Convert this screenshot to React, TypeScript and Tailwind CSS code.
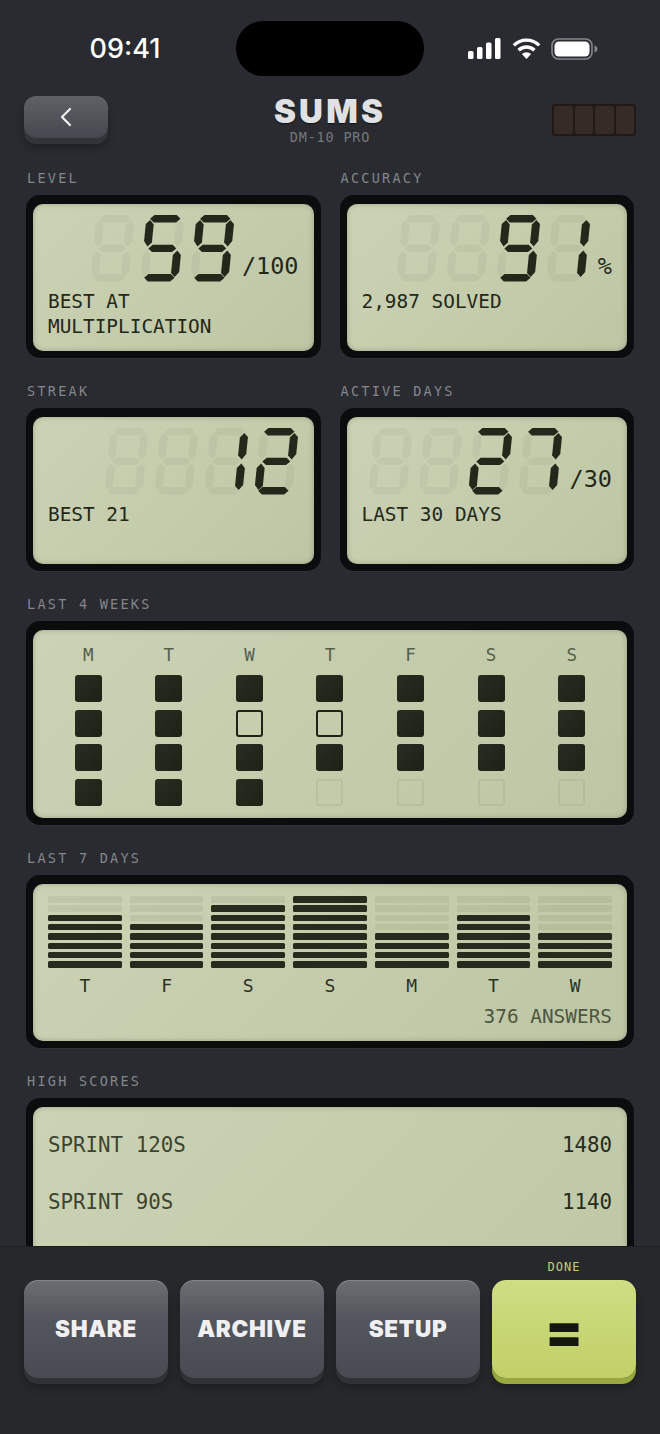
import React from 'react';

const MAP: Record<string, string> = {
  '0': 'abcdef', '1': 'bc', '2': 'abged', '3': 'abgcd', '4': 'fgbc', '5': 'afgcd', '6': 'afgedc', '7': 'abc', '8': 'abcdefg', '9': 'abcdfg', ' ': '',
};
const SEG: Record<string, number[][]> = {
  a: [[3.8, 3.7], [7.8, 0], [30.2, 0], [34.2, 3.7], [30.2, 7.4], [7.8, 7.4]],
  b: [[30.2, 9.5], [34.2, 5], [38.2, 9], [38.2, 26], [34.2, 31.5], [30.2, 27.5]],
  c: [[30.2, 40], [34.2, 35.5], [38.2, 40], [38.2, 57], [34.2, 62], [30.2, 58]],
  d: [[3.8, 62.8], [7.8, 59.1], [30.2, 59.1], [34.2, 62.8], [30.2, 66.5], [7.8, 66.5]],
  e: [[0, 40], [4, 35.5], [8, 40], [8, 58], [4, 62], [0, 57]],
  f: [[0, 9], [4, 5], [8, 9.5], [8, 27.5], [4, 31.5], [0, 26]],
  g: [[5, 33.4], [9, 29.7], [29, 29.7], [33, 33.4], [29, 37.1], [9, 37.1]],
};
const pts = (p: number[][]) => p.map(([x, y]) => `${x + (66.5 - y) * 0.1},${y}`).join(' ');

function Digit({ c }: { c: string }) {
  const on = MAP[c] ?? '';
  return (
    <svg width="45" height="67" viewBox="0 0 45 67" className="block shrink-0">
      {Object.keys(SEG).map((k) => (
        <polygon key={k} points={pts(SEG[k])} fill={on.includes(k) ? '#23281a' : 'rgba(50,62,30,0.052)'} />
      ))}
    </svg>
  );
}

function Label({ children }: { children: React.ReactNode }) {
  return <div className="h-[18px] mb-[9px] pt-px text-[13.5px] leading-[18px] tracking-[2.25px] pl-px text-[#84868b] whitespace-pre">{children}</div>;
}

function Lcd({ className, children }: { className: string; children: React.ReactNode }) {
  return (
    <div className="rounded-[14px] bg-[#0b0c0e] pt-[9px] px-[7px] pb-[7px] shadow-[0_1px_1px_rgba(255,255,255,0.04)]">
      <div className={`rounded-[10px] bg-linear-135 from-[#ccd3b5] to-[#bdc6a4] shadow-[inset_0_0_5px_rgba(70,80,45,0.35)] px-[15px] ${className}`}>{children}</div>
    </div>
  );
}

function Stat({ label, digits, suffix, lines }: { label: string; digits: string; suffix?: string; lines: string[] }) {
  return (
    <div>
      <Label>{label}</Label>
      <Lcd className="h-[147px] pt-[11px]">
        <div className="flex justify-end items-end h-[67px]">
          <div className="flex gap-[5px]">
            {digits.split('').map((c, i) => <Digit key={i} c={c} />)}
          </div>
          {suffix && <div className="ml-[7px] mb-[2px] text-[#23281a] leading-[28px] text-[23.5px]">{suffix}</div>}
        </div>
        <div className="mt-[7px] text-[19.4px] leading-[25px] text-[#23281a]">
          {lines.map((l) => <div key={l} className="whitespace-pre">{l}</div>)}
        </div>
      </Lcd>
    </div>
  );
}

const WEEK = ['M', 'T', 'W', 'T', 'F', 'S', 'S'];
const GRID = ['fffffff', 'ffoofff', 'fffffff', 'fffgggg'];

function Square({ k }: { k: string }) {
  if (k === 'f') return <div className="size-[27px] rounded-[3px] bg-linear-135 from-[#282d21] to-[#1d2117]" />;
  if (k === 'o') return <div className="size-[27px] rounded-[3px] border-[2.5px] border-[#1f2418]" />;
  return <div className="size-[27px] rounded-[3px] border-2 border-[rgba(50,62,30,0.07)]" />;
}

const BARS: [string, number][] = [['T', 6], ['F', 5], ['S', 7], ['S', 8], ['M', 4], ['T', 6], ['W', 4]];

function KeyButton({ children }: { children: React.ReactNode }) {
  return (
    <div className="h-[98px] rounded-[14px] bg-linear-to-b from-[#6c6e74] via-[#53565c] via-40% to-[#484b52] shadow-[0_6px_0_#313236,0_9px_10px_rgba(0,0,0,0.3),inset_0_1px_0_rgba(255,255,255,0.18)] flex items-center justify-center text-[#f0f0f2] font-['Inter',sans-serif] font-black text-[22.5px] tracking-[0.7px]">
      {children}
    </div>
  );
}

export default function App() {
  return (
    <div className="w-[660px] h-[1434px] overflow-hidden flex flex-col bg-[#2a2b30] font-['DejaVu_Sans_Mono',monospace]">
      <div className="h-[96px] shrink-0 flex items-start pt-[21px]">
        <div className="w-[236px] h-[55px] flex items-center justify-center pl-[14px] pt-[1px] font-['Inter',sans-serif] font-medium text-[27px] text-white">09:41</div>
        <div className="w-[188px] h-[55px] rounded-[27px] bg-black" />
        <div className="h-[55px] flex items-center pl-[44px] gap-[11px]">
          <svg width="33" height="21" viewBox="0 0 33 21">
            <rect x="0" y="13" width="5.5" height="8" rx="1.5" fill="#fff" />
            <rect x="9" y="9" width="5.5" height="12" rx="1.5" fill="#fff" />
            <rect x="18" y="4.5" width="5.5" height="16.5" rx="1.5" fill="#fff" />
            <rect x="27" y="0" width="5.5" height="21" rx="1.5" fill="#fff" />
          </svg>
          <svg width="29" height="21" viewBox="0 0 29 21" fill="none" stroke="#fff" strokeWidth="3.4">
            <path d="M1.8 7.4 A18 18 0 0 1 27.2 7.4" />
            <path d="M6.6 12.2 A11.2 11.2 0 0 1 22.4 12.2" />
            <path d="M14.5 21 L9.9 16 A6.6 6.6 0 0 1 19.1 16 Z" fill="#fff" stroke="none" />
          </svg>
          <svg width="47" height="22" viewBox="0 0 47 22" className="-ml-[1px]">
            <rect x="1" y="1" width="40" height="20" rx="6.5" fill="none" stroke="#85868a" strokeWidth="1.6" />
            <rect x="3.5" y="3.5" width="35" height="15" rx="4.5" fill="#fff" />
            <path d="M43.5 7.5 C45.5 8 46.5 9.5 46.5 11 C46.5 12.5 45.5 14 43.5 14.5 Z" fill="#85868a" />
          </svg>
        </div>
      </div>

      <div className="h-[72px] shrink-0 relative px-[24px] flex justify-between items-start">
        <div className="w-[84px] h-[42px] rounded-[12px] bg-linear-to-b from-[#5f6167] to-[#45484e] shadow-[0_6px_0_#333439,0_9px_9px_rgba(0,0,0,0.3)] flex items-center justify-center">
          <svg width="12" height="20" viewBox="0 0 12 20" fill="none" stroke="#f2f2f2" strokeWidth="2.2" strokeLinecap="round" strokeLinejoin="round">
            <path d="M10 2 L2 10 L10 18" />
          </svg>
        </div>
        <div className="flex flex-col items-center -mt-[1px]">
          <div className="font-['Inter',sans-serif] font-black text-[33px] leading-[33px] tracking-[3.2px] text-[#e0e1e4] [text-shadow:0_1px_1px_rgba(0,0,0,0.6)]">SUMS</div>
          <div className="mt-[1px] text-[13.5px] leading-[16px] tracking-[0.8px] text-[#74777c]">DM-10 PRO</div>
        </div>
        <div className="w-[84px] h-[32px] mt-[8px] rounded-[3px] bg-[#211916] p-[2px] flex gap-[2px]">
          {[0, 1, 2, 3].map((i) => <div key={i} className="flex-1 rounded-[2px] bg-[#362b25]" />)}
        </div>
      </div>

      <div className="flex-1 min-h-0 overflow-hidden px-[26px]">
        <div className="flex flex-col gap-[23px]">
          <div className="grid grid-cols-2 gap-[19px]">
            <Stat label="LEVEL" digits=" 59" suffix="/100" lines={['BEST AT', 'MULTIPLICATION']} />
            <Stat label="ACCURACY" digits="  91" suffix="%" lines={['2,987 SOLVED']} />
          </div>
          <div className="grid grid-cols-2 gap-[19px]">
            <Stat label="STREAK" digits="  12" lines={['BEST 21']} />
            <Stat label="ACTIVE DAYS" digits="  27" suffix="/30" lines={['LAST 30 DAYS']} />
          </div>

          <div>
            <Label>LAST 4 WEEKS</Label>
            <Lcd className="h-[188px] pt-[14px]">
              <div className="grid grid-cols-7">
                {WEEK.map((d, c) => (
                  <div key={c} className="flex flex-col items-center">
                    <div className="h-[22px] leading-[22px] text-[17.5px] text-[#565e4b]">{d}</div>
                    <div className="mt-[9px] flex flex-col gap-[7.5px]">
                      {GRID.map((row, r) => <Square key={r} k={row[c]} />)}
                    </div>
                  </div>
                ))}
              </div>
            </Lcd>
          </div>

          <div>
            <Label>LAST 7 DAYS</Label>
            <Lcd className="h-[157px] pt-[12px]">
              <div className="grid grid-cols-7 gap-[8px]">
                {BARS.map(([d, n], c) => (
                  <div key={c} className="flex flex-col items-center">
                    <div className="w-full flex flex-col gap-[2.83px]">
                      {[7, 6, 5, 4, 3, 2, 1, 0].map((i) => (
                        <div key={i} className={`h-[6.5px] rounded-[1.5px] ${i < n ? 'bg-[#262b1d]' : 'bg-[rgba(50,62,30,0.08)]'}`} />
                      ))}
                    </div>
                    <div className="mt-[6px] h-[24px] leading-[24px] text-[18px] text-[#2b3122]">{d}</div>
                  </div>
                ))}
              </div>
              <div className="mt-[6px] text-right text-[19.4px] leading-[25px] text-[#4e5640]">376 ANSWERS</div>
            </Lcd>
          </div>

          <div>
            <Label>HIGH SCORES</Label>
            <Lcd className="h-[260px] pt-[26px]">
              <div className="flex flex-col gap-[32px] text-[20.8px] leading-[25px]">
                <div className="flex justify-between"><span className="text-[#3d4431]">SPRINT 120S</span><span className="text-[#262c1e]">1480</span></div>
                <div className="flex justify-between"><span className="text-[#3d4431]">SPRINT 90S</span><span className="text-[#262c1e]">1140</span></div>
              </div>
            </Lcd>
          </div>
        </div>
      </div>

      <div className="h-[188px] shrink-0 bg-[#27282b] border-t border-[#1d1e20] px-[24px] pt-[11px]">
        <div className="grid grid-cols-4 gap-[12px] items-end">
          <KeyButton>SHARE</KeyButton>
          <KeyButton>ARCHIVE</KeyButton>
          <KeyButton>SETUP</KeyButton>
          <div>
            <div className="h-[18px] mb-[4px] text-center text-[12px] leading-[18px] tracking-[1px] text-[#c4d06f]">DONE</div>
            <div className="h-[98px] rounded-[14px] bg-linear-to-b from-[#cfdd83] to-[#c1d067] shadow-[0_6px_0_#98a73e,0_9px_10px_rgba(0,0,0,0.3)] flex items-center justify-center pt-[4px] font-['Inter',sans-serif] font-black text-[55px] leading-none text-[#14170c]">=</div>
          </div>
        </div>
      </div>
    </div>
  );
}
